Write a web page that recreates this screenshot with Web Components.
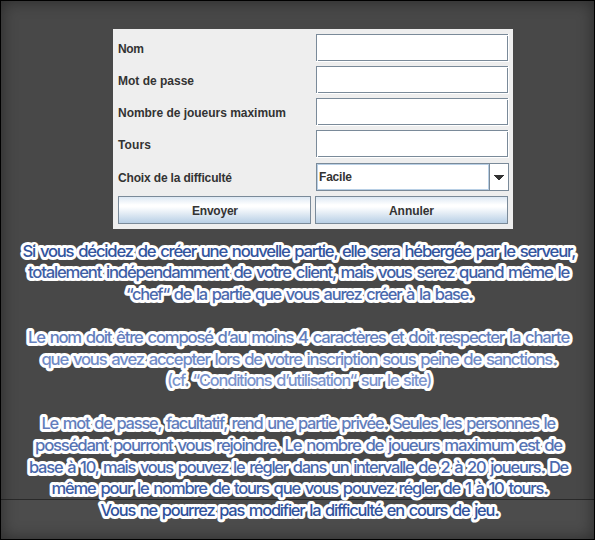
<!DOCTYPE html>
<html lang="fr"><head><meta charset="utf-8"><title>Nouvelle partie</title>
<style>html,body{margin:0;height:540px;overflow:hidden}</style></head>
<body>
<game-page>
 <game-form>
  <form-row label="Nom" w="26"><text-box></text-box></form-row>
  <form-row label="Mot de passe" w="76"><text-box></text-box></form-row>
  <form-row label="Nombre de joueurs maximum" w="168"><text-box></text-box></form-row>
  <form-row label="Tours" w="33"><text-box></text-box></form-row>
  <form-row label="Choix de la difficulté" w="114" style="margin-top:1px"><combo-box></combo-box></form-row>
  <button-row><metal-button label="Envoyer" w="46"></metal-button><metal-button label="Annuler" w="45"></metal-button></button-row>
 </game-form>
 <help-text></help-text>
</game-page>
<script>
function define(name, render){
  customElements.define(name, class extends HTMLElement{
    constructor(){super();this.attachShadow({mode:'open'});}
    connectedCallback(){this.shadowRoot.innerHTML=render(this);}
  });
}
const fitted=(text,w,y=13)=>`<svg width="${w}" height="16" style="display:block;overflow:visible"><text x="0" y="${y}" textLength="${w}" font-family="Liberation Sans, Arial, sans-serif" font-weight="700" font-size="12" fill="#333">${text}</text></svg>`;

define('game-page',()=>`<style>
:host{display:flex;flex-direction:column;box-sizing:border-box;width:595px;height:540px;padding:28px 0 0;
border:1px solid #000;background:linear-gradient(#484848 0 498px,#292929 498px 499px,#4c4c4c 499px);box-shadow:inset 0 0 15px 1px rgba(0,0,0,.4)}
</style><slot></slot>`);
define('game-form',()=>`<style>
:host{display:flex;flex-direction:column;gap:4px;box-sizing:border-box;width:400px;height:200px;padding:5px 4px 5px 5px;margin-left:112px;background:#eee;flex:none}
</style><slot></slot>`);
define('form-row',e=>`<style>
:host{display:grid;grid-template-columns:198px 193px;height:28px;align-items:center}
</style>${fitted(e.getAttribute('label'),e.getAttribute('w'))}<slot></slot>`);
define('text-box',()=>`<style>
:host{display:block;box-sizing:border-box;height:28px;padding:0 1px 1px 0;background:#fff}
div{position:relative;box-sizing:border-box;height:28px;height:27px;border:1px solid #7a8a99;background:#fff}
div::before,div::after{content:"";position:absolute;width:1px;height:1px;background:#fff}
div::before{left:0;bottom:-1px}
div::after{right:-1px;top:0}
</style><div></div>`);
define('combo-box',()=>`<style>
:host{display:flex;box-sizing:border-box;height:28px;border:1px solid #7a8a99;background:#fff}
.value{box-sizing:border-box;width:172px;border:1px solid #b8cfe5;padding:4px 0 0 1px}
.arrow{flex:1;border-left:1px solid #7a8a99;display:flex;align-items:center;justify-content:center}
</style><div class="value">${fitted('Facile',33,12)}</div><div class="arrow"><svg width="10" height="5"><path d="M0 0h10v1H0zM1 1h8v1H1zM2 2h6v1H2zM3 3h4v1H3zM4 4h2v1H4z" fill="#333"/></svg></div>`);
define('button-row',()=>`<style>:host{display:flex;gap:4px;margin-top:1px}</style><slot></slot>`);
define('metal-button',e=>`<style>
:host{display:flex;box-sizing:border-box;width:193px;height:28px;align-items:center;justify-content:center;border:1px solid #7a8a99;background:linear-gradient(#dde8f3 0,#fff 30%,#fff 38%,#b8cfe5 100%)}
</style>${fitted(e.getAttribute('label'),e.getAttribute('w'))}`);

const lines=[
['Si vous décidez de créer une nouvelle partie, elle sera hébergée par le serveur,',22.5,575,257],
['totalement indépendamment de votre client, mais vous serez quand même le',28,569,278.3],
['“chef“ de la partie que vous aurez créer à la base.',126,472,300],
['Le nom doit être composé d’au moins 4 caractères et doit respecter la charte',28,569,343],
['que vous avez accepter lors de votre inscription sous peine de sanctions.',41.5,556,365],
['(cf. “Conditions d’utilisation“ sur le site)',167,431,386],
['Le mot de passe, facultatif, rend une partie privée. Seules les personnes le',41.5,555,429],
['possédant pourront vous rejoindre. Le nombre de joueurs maximum est de',35,562,451],
['base à 10, mais vous pouvez le régler dans un intervalle de 2 à 20 joueurs. De',29,568,472.5],
['même pour le nombre de tours que vous pouvez régler de 1 à 10 tours.',51.5,547,494],
['Vous ne pourrez pas modifier la difficulté en cours de jeu.',100.5,498,515.5]];
define('help-text',()=>{
  const top=229;
  const rows=lines.map(([t,a,b,y])=>`<text x="${a-1}" y="${y-top}" textLength="${b-a}" lengthAdjust="spacingAndGlyphs">${t}</text>`).join('');
  return `<style>
:host{display:block;flex:none}
svg{display:block;overflow:visible}
text{font:550 16.5px Inter,"Liberation Sans",sans-serif;letter-spacing:-1.2px;word-spacing:1.6px;fill:url(#ink);stroke:#fff;stroke-width:6px;stroke-linejoin:round;paint-order:stroke}
</style><svg width="593" height="300"><defs><linearGradient id="ink" gradientUnits="userSpaceOnUse" x1="0" x2="0" y1="15" y2="287"><stop offset="0" stop-color="#2d4f9a"/><stop offset=".5" stop-color="#7b94cd"/><stop offset="1" stop-color="#2d4f9a"/></linearGradient></defs>${rows}</svg>`;
});
</script>
</body></html>
